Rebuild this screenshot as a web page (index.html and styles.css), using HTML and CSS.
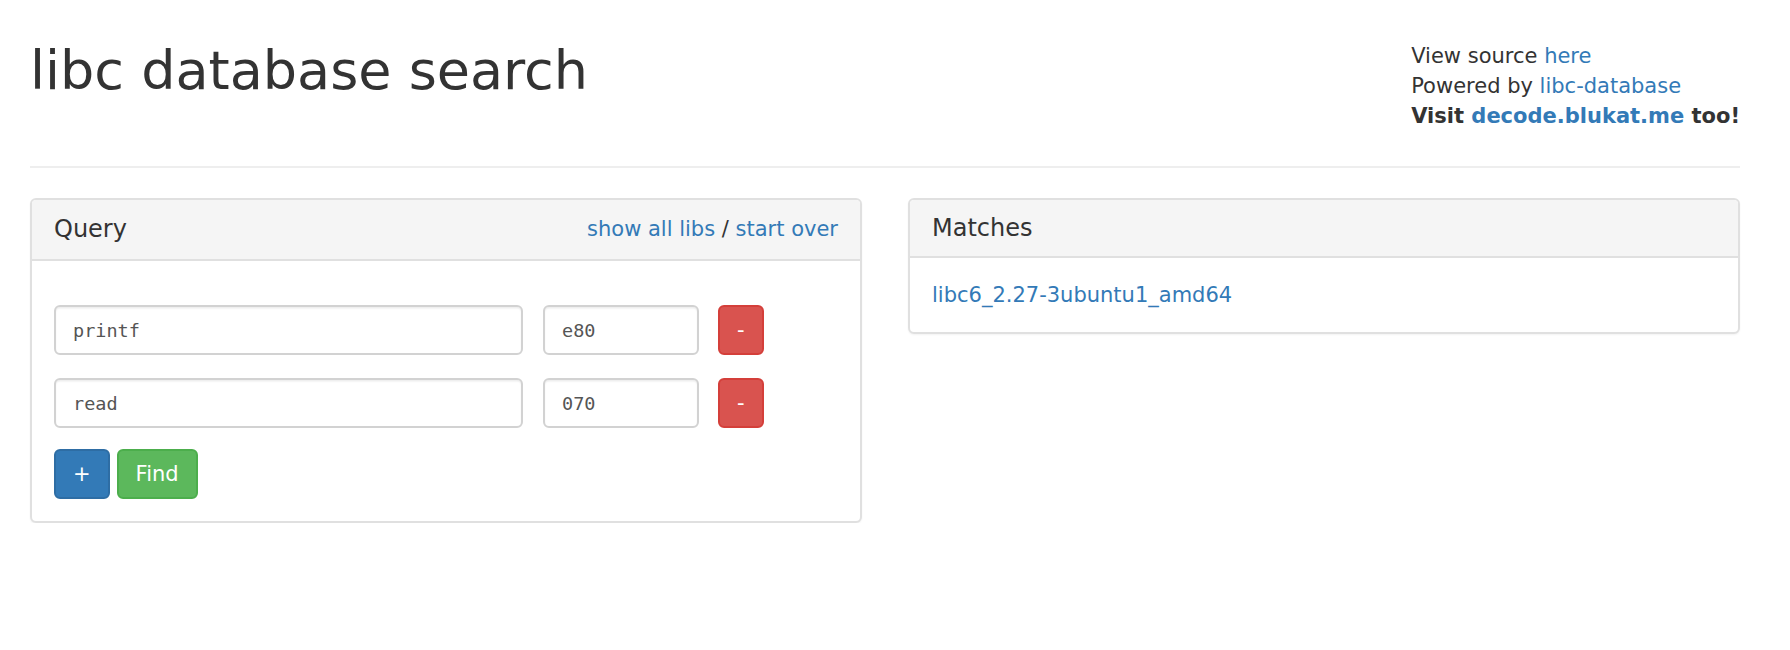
FILE: index.html
```html
<!DOCTYPE html>
<html lang="en">
<head>
<meta charset="utf-8">
<title>libc database search</title>
<link rel="stylesheet" href="styles.css">
</head>
<body>
<div class="page">
  <header class="page-header">
    <h1 class="title">libc database search</h1>
    <div class="about">
      <div>View source <a href="#">here</a></div>
      <div>Powered by <a href="#">libc-database</a></div>
      <div class="visit">Visit <a href="#">decode.blukat.me</a> too!</div>
    </div>
  </header>
  <div class="cols">
    <section class="panel">
      <div class="panel-heading query-heading">
        <h3 class="panel-title">Query</h3>
        <div class="heading-links"><a href="#">show all libs</a> / <a href="#">start over</a></div>
      </div>
      <div class="panel-body query-body">
        <div class="query-row">
          <input class="field field-name" type="text" value="printf">
          <input class="field field-offset" type="text" value="e80">
          <button class="btn btn-danger" type="button">-</button>
        </div>
        <div class="query-row">
          <input class="field field-name" type="text" value="read">
          <input class="field field-offset" type="text" value="070">
          <button class="btn btn-danger" type="button">-</button>
        </div>
        <div class="actions">
          <button class="btn btn-primary" type="button">+</button>
          <button class="btn btn-success" type="button">Find</button>
        </div>
      </div>
    </section>
    <section class="panel">
      <div class="panel-heading matches-heading">
        <h3 class="panel-title">Matches</h3>
      </div>
      <div class="panel-body matches-body">
        <a href="#">libc6_2.27-3ubuntu1_amd64</a>
      </div>
    </section>
  </div>
</div>
</body>
</html>
```

FILE: styles.css
```css
* {
  box-sizing: border-box;
}

html, body {
  margin: 0;
  padding: 0;
  background: #fff;
}

body {
  font-family: "DejaVu Sans", "Liberation Sans", sans-serif;
  font-size: 21px;
  line-height: 30px;
  color: #333;
}

a {
  color: #337ab7;
  text-decoration: none;
}

.page {
  width: 1710px;
  margin-left: 30px;
}

.page-header {
  display: flex;
  justify-content: space-between;
  align-items: flex-start;
  padding-top: 41px;
  padding-bottom: 35px;
  border-bottom: 2px solid #eeeeee;
}

.title {
  margin: 0;
  font-size: 54px;
  line-height: 59px;
  font-weight: normal;
  color: #333;
}

.about {
  text-align: left;
  line-height: 30px;
}

.visit {
  font-weight: bold;
}

.cols {
  display: grid;
  grid-template-columns: 1fr 1fr;
  column-gap: 46px;
  align-items: start;
  margin-top: 30px;
}

.panel {
  border: 2px solid #e0e0e0;
  border-radius: 6px;
  background: #fff;
  box-shadow: 0 1px 2px rgba(0, 0, 0, 0.05);
}

.panel-heading {
  background: #f5f5f5;
  border-bottom: 2px solid #e0e0e0;
  border-radius: 4px 4px 0 0;
  padding: 0 22px;
}

.panel-title {
  margin: 0;
  font-size: 24px;
  line-height: 26px;
  font-weight: normal;
  color: #333;
}

.query-heading {
  display: flex;
  justify-content: space-between;
  align-items: center;
  padding-top: 14px;
  padding-bottom: 15px;
}

.heading-links {
  line-height: 30px;
}

.matches-heading {
  padding-top: 15px;
  padding-bottom: 15px;
}

.panel-body {
  padding: 22px;
}

.query-body {
  padding-top: 44px;
}

.query-row {
  display: flex;
  align-items: center;
  margin-bottom: 23px;
}

.query-row + .query-row {
  margin-bottom: 21px;
}

.field {
  height: 50px;
  border: 2px solid #d2d2d2;
  border-radius: 6px;
  box-shadow: inset 0 1.5px 1.5px rgba(0, 0, 0, 0.075);
  padding: 0 17px;
  font-family: "DejaVu Sans Mono", "Liberation Mono", monospace;
  font-size: 18.5px;
  color: #555;
  background: #fff;
  outline: none;
}

.field-name {
  width: 469px;
}

.field-offset {
  width: 156px;
  margin-left: 20px;
}

.btn {
  height: 50px;
  padding: 0 17px;
  border: 2px solid transparent;
  border-radius: 6px;
  font-family: "DejaVu Sans", "Liberation Sans", sans-serif;
  font-size: 21px;
  line-height: 30px;
  color: #fff;
  cursor: pointer;
}

.query-row .btn {
  margin-left: 19px;
}

.btn-danger {
  background: #d9534f;
  border-color: #d43f3a;
}

.btn-primary {
  background: #337ab7;
  border-color: #2e6da4;
}

.btn-success {
  background: #5cb85c;
  border-color: #4cae4c;
}

.actions {
  display: flex;
  gap: 7px;
}

.matches-body {
  padding-top: 22px;
  padding-bottom: 22px;
}
```
